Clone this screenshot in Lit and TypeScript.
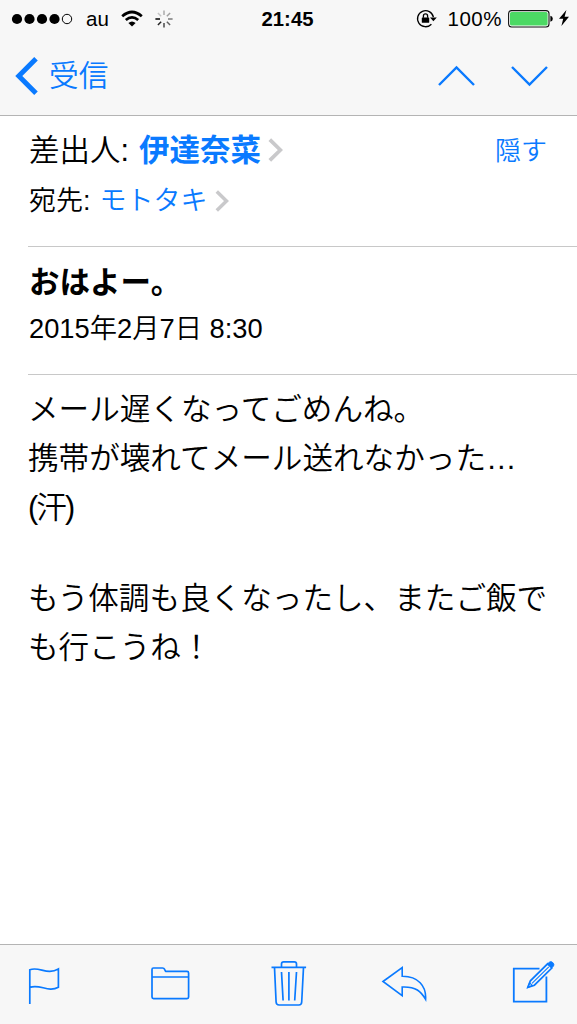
import { LitElement, html, css, svg } from "lit";
import { customElement } from "lit/decorators.js";

const spokes = [
  [0, 0.3], [45, 0.35], [90, 0.5], [135, 0.6],
  [180, 0.7], [225, 0.85], [270, 1], [315, 0.2],
];

@customElement("status-bar")
class StatusBar extends LitElement {
  static styles = css`
    :host { display: flex; height: 38px; align-items: center; color: #000;
      font: 20px/38px "Liberation Sans", sans-serif; white-space: nowrap; }
    svg { display: block; flex: none; }
    .left, .right { flex: 1; display: flex; align-items: center; }
    .right { justify-content: flex-end; }
    .dots { margin-left: 11px; }
    .carrier { margin-left: 13px; width: 24px; font-size: 20.5px; }
    .wifi { margin: -2px 0 0 11px; }
    .spin { margin-left: 12px; }
    .time { font-weight: 700; font-size: 20.3px; margin-right: 2px; }
    .lock { margin-right: -1px; }
    .pct { margin: 0 6px 0 11px; letter-spacing: 0.5px; font-size: 20.5px; }
    .bolt { margin: -2px 8px 0 5px; }
  `;
  render() {
    return html`
      <div class="left">
        <svg class="dots" width="62" height="12" viewBox="0 0 62 12">
          ${[6, 18.5, 31, 43.5].map((x) => svg`<circle cx=${x} cy="6" r="5.1"/>`)}
          <circle cx="56" cy="6" r="4.7" fill="none" stroke="#000" stroke-width="1"/>
        </svg>
        <span class="carrier">au</span>
        <svg class="wifi" width="22" height="17" viewBox="0 0 22 17" fill="none" stroke="#000" stroke-width="2.8">
          <path d="M1.2 6.2Q11 -2.2 20.8 6.2"/>
          <path d="M4.8 10Q11 4.8 17.2 10"/>
          <path d="M11 16.6L7.4 13Q11 9.8 14.6 13Z" fill="#000" stroke="none"/>
        </svg>
        <svg class="spin" width="18" height="18" viewBox="-9 -9 18 18">
          ${spokes.map(([a, o]) => svg`<path d="M0 -4V-8.6" stroke="#000" stroke-width="1.5" opacity=${o} transform="rotate(${a})"/>`)}
        </svg>
      </div>
      <span class="time">21:45</span>
      <div class="right">
        <svg class="lock" width="22" height="20" viewBox="0 0 22 20" fill="none" stroke="#000">
          <path d="M17.4 8.2A8 8 0 1 0 15.4 15.2" stroke-width="1.3"/>
          <path d="M14 8.4H20.8L17.4 12.2Z" fill="#000" stroke="none"/>
          <rect x="5.8" y="8.4" width="7.4" height="5.4" rx=".6" fill="#000" stroke="none"/>
          <path d="M7.4 8.8V7A2.1 2.1 0 0 1 11.6 7V8.8" stroke-width="1.3"/>
        </svg>
        <span class="pct">100%</span>
        <svg width="46" height="18" viewBox="0 0 46 18">
          <rect x=".6" y=".6" width="40.4" height="16.4" rx="3" fill="#fff" stroke="#111" stroke-width="1.1"/>
          <rect x="2" y="2" width="37.6" height="13.6" rx="1.6" fill="#4cd964"/>
          <path d="M42.4 5.8Q44.8 6.4 44.8 8.8T42.4 11.8Z"/>
        </svg>
        <svg class="bolt" width="10" height="18" viewBox="0 0 10 18"><path d="M7.4 1L0 9.8H4.2L2.4 17L10 7.8H5.6Z"/></svg>
      </div>`;
  }
}

@customElement("app-root")
class AppRoot extends LitElement {
  static styles = css`
    :host { display: flex; flex-direction: column; width: 100%; height: 1024px; box-sizing: border-box;
      overflow: hidden; background: #fff; color: #000;
      font-family: "Liberation Sans", "Noto Sans CJK JP", sans-serif; white-space: nowrap; }
    svg { display: block; flex: none; }
    .top { height: 116px; box-sizing: border-box; background: #f7f7f7; border-bottom: 1px solid #b4b4b4; }
    .nav { height: 77px; display: flex; align-items: center; color: #0a7aff; }
    .back { margin: -1px 0 0 15px; }
    .box { flex: 1; margin: -5px 0 0 11px; font: 350 29.7px/70px "Noto Sans CJK JP", sans-serif; }
    .up, .down { margin-top: -2px; }
    .down { margin-right: 29px; margin-left: 36px; }
    .blue { color: #0a7aff; }
    .people { margin-left: 28px; height: 131px; box-sizing: border-box; padding: 9px 0 0 1px; border-bottom: 1px solid #c8c8c8; }
    .row { display: flex; align-items: center; }
    .from { height: 50px; font-size: 30.5px; line-height: 50px; font-weight: 350; }
    .from b { margin-left: 10px; font-weight: 700; }
    .from .chev { margin: 0 0 0 7px; }
    .hide { margin: 1px 30px 0 auto; font-size: 26px; }
    .to { height: 52px; font-size: 27px; line-height: 52px; font-weight: 350; }
    .to .blue { margin-left: 9px; }
    .to .chev { margin: 0 0 0 7px; }
    .subject { margin-left: 28px; height: 128px; box-sizing: border-box; padding: 11px 0 0 1px; border-bottom: 1px solid #c8c8c8; }
    .title { font-size: 30.5px; font-weight: 700; line-height: 48px; height: 48px; }
    .date { font-size: 27.3px; font-weight: 350; line-height: 46px; height: 46px; }
    .body { flex: 1; margin-left: 28px; padding-top: 10px; font: 350 30.6px/49px "Liberation Sans", "Noto Sans CJK JP", sans-serif; }
    .body p { margin: 0 0 42px; }
    .paren { letter-spacing: -1.9px; }
    .tools { height: 80px; box-sizing: border-box; background: #f7f7f7; border-top: 1px solid #b4b4b4;
      display: flex; align-items: center; padding: 0 0 1px 26.5px; }
    .folder { margin-left: 89.5px; }
    .trash { margin-left: 80.5px; }
    .reply { margin-left: 74.5px; }
    .compose { margin-left: 85px; }
  `;
  chevron(w: number, h: number) {
    return html`<svg class="chev" width=${w} height=${h} viewBox="0 0 15 24" fill="none" stroke="#c9c9cb" stroke-width="3.8"><path d="M1.8 1.6L12.4 12L1.8 22.4"/></svg>`;
  }
  render() {
    return html`
      <header class="top">
        <status-bar></status-bar>
        <div class="nav">
          <svg class="back" width="23" height="38" viewBox="0 0 23 38" fill="none" stroke="#0a7aff" stroke-width="5"><path d="M21 1.8L3.8 19L21 36.2"/></svg>
          <span class="box">受信</span>
          <svg class="up" width="37" height="22" viewBox="0 0 37 22" fill="none" stroke="#0a7aff" stroke-width="2.4"><path d="M1 20L18.5 2.4L36 20"/></svg>
          <svg class="down" width="37" height="22" viewBox="0 0 37 22" fill="none" stroke="#0a7aff" stroke-width="2.4"><path d="M1 2L18.5 19.6L36 2"/></svg>
        </div>
      </header>
      <section class="people">
        <div class="row from"><span>差出人:</span><b class="blue">伊達奈菜</b>${this.chevron(15, 24)}<span class="blue hide">隠す</span></div>
        <div class="row to"><span>宛先:</span><span class="blue">モトタキ</span>${this.chevron(14, 22)}</div>
      </section>
      <section class="subject">
        <div class="title">おはよー。</div>
        <div class="date">2015年2月7日 8:30</div>
      </section>
      <main class="body">
        <p>メール遅くなってごめんね。<br>携帯が壊れてメール送れなかった…<br><span class="paren">(汗)</span></p>
        <p>もう体調も良くなったし、またご飯で<br>も行こうね！</p>
      </main>
      <footer class="tools">
        <svg width="34" height="46" viewBox="27 961 34 46" fill="none" stroke="#0a7aff" stroke-width="1.7">
          <path d="M29.8 1004V969.8C39 966 47 975.5 58.4 969V987.2C48 993 40 983.5 29.8 987.4"/>
        </svg>
        <svg class="folder" width="40" height="46" viewBox="150 961 40 46" fill="none" stroke="#0a7aff" stroke-width="1.7" stroke-linejoin="round">
          <path d="M152 997V969.4Q152 968 153.4 968H162.6Q164 968 164.6 969.4L165.6 971.4H187Q188.6 971.4 188.6 973V997Q188.6 998.6 187 998.6H153.6Q152 998.6 152 997ZM152 977H188.6"/>
        </svg>
        <svg class="trash" width="36" height="46" viewBox="271.5 961 36 46" fill="none" stroke="#0a7aff" stroke-width="1.7">
          <path d="M272 967.3H306.6M282 967V964Q282 961.9 284.2 961.9H294.8Q297 961.9 297 964V967M275 967.5L276.6 1002Q276.8 1005 279.6 1005H299.4Q302 1005 302.2 1002L304 967.5M282 972L283.6 1000.5M289.4 972V1000.5M297 972L295.2 1000.5"/>
        </svg>
        <svg class="reply" width="46" height="46" viewBox="381 961 46 46" fill="none" stroke="#0a7aff" stroke-width="1.6">
          <path d="M383 981.5L402.2 967.6V976.2C418 976 426.5 986 425.6 999.4C421 991.5 416 986.4 402.2 987V995.6Z"/>
        </svg>
        <svg class="compose" width="44" height="46" viewBox="513 961 44 46" fill="none" stroke="#0a7aff" stroke-width="1.8">
          <path d="M540.5 968.6H514.8V1001.6H547.4V976.5"/>
          <path d="M528.8 987.4L531.4 980.8L548.6 963.8L552.8 968L535.4 985.2Z" stroke-width="1.7"/>
          <path d="M533 983.4L549.8 966.8M528.8 987.4L530.6 982.8L533.4 985.5Z" stroke-width="1.1"/>
          <path d="M548.8 963.6L550.6 962Q552 960.9 553.8 962.6T554.6 966L552.8 967.8Z" fill="#0a7aff" stroke-width=".8"/>
        </svg>
      </footer>`;
  }
}
